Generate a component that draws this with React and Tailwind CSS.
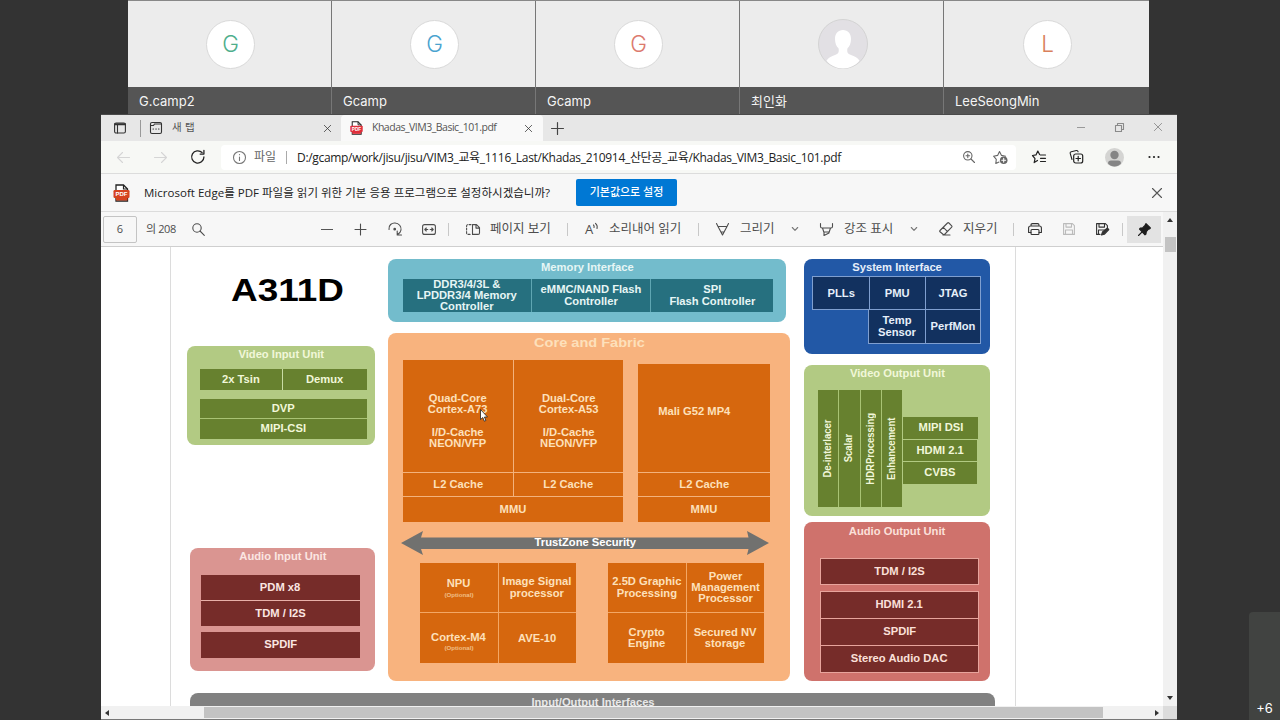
import React from "react";

const participants = [
    { name: "G.camp2", initial: "G", color: "text-[#4fae8c]" },
    { name: "Gcamp", initial: "G", color: "text-[#4aa3cf]" },
    { name: "Gcamp", initial: "G", color: "text-[#dc7a6e]" },
    { name: "최인화", initial: null, color: "" },
    { name: "LeeSeongMin", initial: "L", color: "text-[#d9805c]" },
];

const Icon = ({ children, className = "size-4", box = "0 0 16 16" }) => (
    <svg viewBox={box} className={`shrink-0 overflow-visible ${className}`} fill="none" stroke="currentColor" strokeWidth="1.1" strokeLinecap="round" strokeLinejoin="round">
        {children}
    </svg>
);

const PdfIcon = ({ className }) => (
    <svg viewBox="0 0 16 18" className={`shrink-0 ${className}`}>
        <path d="M2.500 1h7.500l4 4V17H2.500z" fill="#fff" stroke="#222" strokeWidth="1.300" />
        <path d="M10 1v4h4" fill="none" stroke="#222" strokeWidth="1.200" />
        <rect x="0" y="6" width="16" height="8" rx="1.200" fill="currentColor" />
        <path d="M2.500 14h11.500v2.500h-11.500z" fill="currentColor" />
        <text x="8" y="12.300" textAnchor="middle" fontSize="6" fontWeight="700" fill="#fff" fontFamily="Liberation Sans, sans-serif">PDF</text>
    </svg>
);

const CloseIcon = ({ className }) => (
    <Icon className={className} box="0 0 10 10">
        <path d="M.5.5l9 9M9.500.5l-9 9" />
    </Icon>
);

const ParticipantTile = ({ name, initial, color }) => (
    <div className="flex h-full w-[204px] shrink-0 flex-col border-r border-[#777] last:w-[205px] last:border-r-0">
        <div className="flex h-[86px] items-center justify-center bg-[#ececec] pl-0.5">
            {initial ? (
                <div className={`flex size-[49px] items-center justify-center rounded-full border border-[#d9d9d9] bg-white text-[22.5px] font-light ${color}`}>{initial}</div>
            ) : (
                <svg viewBox="0 0 50 50" className="size-[50px]">
                    <circle cx="25" cy="25" r="24.500" fill="#e2e0e4" stroke="#d3d3d3" />
                    <path d="M25 11c5 0 8 3.600 8 9 0 4.500-1.500 7.500-3.600 9.500-.5 3.500 0 5 3 6.200 4.600 1.600 7.400 3 9.100 6.100C37.500 46.500 31.500 49.500 25 49.500S12.500 46.500 8.500 41.800c1.700-3.100 4.500-4.500 9.100-6.100 3-1.200 3.500-2.700 3-6.200-2.100-2-3.600-5-3.600-9.500 0-5.400 3-9 8-9z" fill="#fff" />
                </svg>
            )}
        </div>
        <div className="flex flex-1 items-center bg-[#555] pt-0.5 pl-[11px] text-[13px] text-[#f4f4f4]">{name}</div>
    </div>
);

const TabBar = () => (
    <div className="flex h-[26px] shrink-0 items-center bg-[#e7e7e7] text-[#333]">
        <Icon className="ml-[13px] size-3" box="0 0 12 12">
            <rect x=".6" y="1" width="10.800" height="10" rx="1.500" />
            <path d="M1 2.200h10" strokeWidth="2" />
            <path d="M3.500 3v8" />
        </Icon>
        <div className="ml-[14px] h-[17px] w-px bg-[#999]" />
        <Icon className="ml-[9px] size-3" box="0 0 12 12">
            <rect x=".5" y=".5" width="11" height="11" rx="1.500" />
            <path d="M.5 3.500h3l1-1.500h7M3 7h.5M5.800 7h.5M8.500 7h.5" />
        </Icon>
        <div className="ml-2.5 w-[152px] text-[10.5px] tracking-[0.3px] text-[#555]">새 탭</div>
        <CloseIcon className="size-[7px] text-[#333]" />
        <div className="ml-[10px] flex h-full w-[202px] items-center rounded-t bg-[#f9f9f9]">
            <PdfIcon className="ml-[9px] h-3.5 w-[13px] text-[#e02f3c]" />
            <div className="ml-[9px] w-[153px] text-[10.5px] tracking-[-0.5px] whitespace-nowrap text-[#555]">Khadas_VIM3_Basic_101.pdf</div>
            <CloseIcon className="size-[7px] text-[#333]" />
        </div>
        <Icon className="ml-2 size-[13px] text-[#444]" box="0 0 12 12">
            <path d="M6 .5v11M.5 6h11" />
        </Icon>
        <div className="ml-auto flex items-center pr-[15px] pb-0.5 text-[#8a8a8a]">
            <div className="h-px w-2 bg-[#999]" />
            <Icon className="ml-[30px] size-[9px]" box="0 0 9 9">
                <path d="M.5 2.500h6v6h-6zM2.500 2.500v-2h6v6h-2" />
            </Icon>
            <CloseIcon className="ml-[30px] size-[8px]" />
        </div>
    </div>
);

const AddressBar = () => (
    <div className="flex h-8 shrink-0 items-center bg-[#f7f8f5] text-[#222]">
        <Icon className="ml-4 size-[13px] text-[#d5d5d5]" box="0 0 13 13">
            <path d="M12.500 6.500H.5M5.500 1.500l-5 5 5 5" />
        </Icon>
        <Icon className="ml-6 size-[13px] text-[#d5d5d5]" box="0 0 13 13">
            <path d="M.5 6.500h12M7.500 1.500l5 5-5 5" />
        </Icon>
        <Icon className="ml-6 size-[14px]" box="0 0 13 13">
            <path d="M12 6.500A5.700 5.700 0 1 1 10.300 2.400M12 .3v3.500H8.500" strokeWidth="1.200" />
        </Icon>
        <div className="ml-[16px] flex h-[25px] w-[795px] items-center rounded-sm bg-white">
            <Icon className="ml-3 size-[13px] text-[#777]" box="0 0 13 13">
                <circle cx="6.500" cy="6.500" r="6" />
                <path d="M6.500 6v3.500M6.500 3.500v.2" />
            </Icon>
            <div className="ml-2 w-[23px] text-[12px] whitespace-nowrap text-[#666]">파일</div>
            <div className="ml-[9px] h-[13px] w-px bg-[#aaa]" />
            <div className="ml-[10px] w-[550px] pt-px text-[12px] tracking-[-0.32px] whitespace-nowrap text-[#222]">
                D:/gcamp/work/jisu/jisu/VIM3_교육_1116_Last/Khadas_210914_산단공_교육/Khadas_VIM3_Basic_101.pdf
            </div>
            <Icon className="ml-auto size-3 text-[#666]" box="0 0 12 12">
                <circle cx="4.800" cy="4.800" r="4.200" />
                <path d="M8 8l3.500 3.500M4.800 3v3.600M3 4.800h3.600" />
            </Icon>
            <Icon className="mr-2 ml-[18px] size-[15px] text-[#666]" box="0 0 15 15">
                <path d="M6 12l-3.200 1.500.5-4.200L.6 6.200l4-.8L6.500 1.500l2 3.900 4.100.8" />
                <circle cx="10.700" cy="10.200" r="3.800" fill="currentColor" stroke="none" />
                <path d="M10.700 8.300v3.800M8.800 10.200h3.800" stroke="#fff" />
            </Icon>
        </div>
        <Icon className="ml-4 size-[14px]" box="0 0 14 14">
            <path d="M5.500 10.500L2.200 12.600l.8-4L.5 5.500l3.500-.6L5.800 1l1.800 3.500M8.500 5h5M8.500 8.300h5M8.500 11.500h5" strokeWidth="1.200" />
        </Icon>
        <Icon className="ml-[23px] size-[14px]" box="0 0 14 14">
            <path d="M3 9.500L1.200 3.300q-.3-1.300 1-1.600L7.500.5q1.300-.2 1.600 1.300" />
            <rect x="4.700" y="4" width="9" height="9" rx="2" strokeWidth="1.200" />
            <path d="M9.200 6.300v4.500M7 8.500h4.500" strokeWidth="1.200" />
        </Icon>
        <svg viewBox="0 0 19 19" className="ml-[22px] size-[19px]">
            <circle cx="9.500" cy="9.500" r="9.500" fill="#d4d4d2" />
            <circle cx="9.500" cy="7" r="4.200" fill="#858585" />
            <path d="M3 15.500q0-3 3-3h7q3 0 3 3-2.500 3-6.500 3t-6.500-3z" fill="#858585" />
        </svg>
        <svg viewBox="0 0 12 4" className="ml-6 h-1 w-3" fill="#222">
            <circle cx="1.500" cy="2" r="1.100" />
            <circle cx="6" cy="2" r="1.100" />
            <circle cx="10.500" cy="2" r="1.100" />
        </svg>
    </div>
);

const DefaultAppBar = () => (
    <div className="flex h-[39px] shrink-0 items-center border-y border-[#dcdcdc] bg-[#f7f7f7]">
        <PdfIcon className="ml-[12px] h-[18px] w-[17px] text-[#d6431f]" />
        <div className="ml-[14px] w-[432px] text-[11.5px] tracking-[0.02px] whitespace-nowrap text-[#222]">
            Microsoft Edge를 PDF 파일을 읽기 위한 기본 응용 프로그램으로 설정하시겠습니까?
        </div>
        <div className="flex h-[27px] w-[101px] items-center justify-center rounded-xs bg-[#0078d4] text-[11px] font-medium whitespace-nowrap text-white">기본값으로 설정</div>
        <CloseIcon className="mr-[15px] ml-auto size-[10px] text-[#555]" />
    </div>
);

const Divider = ({ className }) => <div className={`h-[13px] w-px shrink-0 bg-[#c8c8c8] ${className}`} />;

const Chevron = ({ className }) => (
    <Icon className={`h-1 w-[6px] text-[#777] ${className}`} box="0 0 6 4">
        <path d="M.3.5L3 3.300 5.700.5" />
    </Icon>
);

const PdfToolbar = () => (
    <div className="flex h-[34px] items-center bg-[#f7f7f7] text-[12.5px] whitespace-nowrap text-[#4d4d4d]">
        <div className="ml-[2px] flex h-[27px] w-[34px] items-center justify-center rounded-xs border border-[#c4c4c4] text-[11px]">6</div>
        <div className="ml-[9px] w-[30px] text-[11px] tracking-[-0.4px]">의 208</div>
        <Icon className="ml-[16px] size-[13px]" box="0 0 13 13">
            <circle cx="5" cy="5" r="4.200" />
            <path d="M8 8l4.300 4.300" />
        </Icon>
        <div className="ml-[116px] h-px w-3 bg-[#555]" />
        <Icon className="ml-[21px] size-[13px]" box="0 0 13 13">
            <path d="M6.500 1v11M1 6.500h11" />
        </Icon>
        <Icon className="ml-[21px] size-[14px]" box="0 0 14 14">
            <path d="M1 7.500C.3 3 4 .8 7 1c4 .2 6.500 3.500 6 7-.3 2-1.500 3.500-3.500 4.500M9.200 9v4h4.300" />
            <circle cx="6.700" cy="7.200" r=".8" fill="currentColor" />
        </Icon>
        <Icon className="ml-[20px] h-[11px] w-[14px]" box="0 0 14 11">
            <rect x=".6" y=".6" width="12.800" height="9.800" rx="2" />
            <path d="M2.800 5.500h3M8.200 5.500h3M4.300 4L2.800 5.500 4.300 7M9.700 4l1.500 1.500L9.700 7" />
        </Icon>
        <Divider className="ml-[12px]" />
        <Icon className="ml-[17px] h-[11px] w-[14px]" box="0 0 14 11">
            <path d="M5 .6H2q-1.400 0-1.400 1.400v7q0 1.400 1.400 1.400h3" strokeDasharray="2 1.500" />
            <path d="M6.500.6h4l3 3v5.400q0 1.400-1.400 1.400H6.500zM10 .6v3.500h3.400" />
        </Icon>
        <div className="ml-[10px] w-[63px]">페이지 보기</div>
        <Divider className="ml-[14px]" />
        <div className="ml-[17px] flex w-[15px] text-[13px] leading-none">
            A
            <Icon className="size-[6px]" box="0 0 6 6">
                <path d="M.5 2q1 1 .5 2.500M2.500.3q2.300 2 1.500 5.200" />
            </Icon>
        </div>
        <div className="ml-[9px] w-[75px]">소리내어 읽기</div>
        <Divider className="ml-[14px]" />
        <Icon className="ml-[17px] size-[13px]" box="0 0 13 13">
            <path d="M.5.5l1.500 3h9l1.500-3M2 3.500l4.500 8.500L11 3.500M5 9h3" />
        </Icon>
        <div className="ml-[11px] w-[36px]">그리기</div>
        <Chevron className="ml-[16px]" />
        <Icon className="ml-[22px] size-[13px]" box="0 0 13 13">
            <path d="M.5.5v3q0 1.500 1.500 1.500h9q1.500 0 1.500-1.500v-3M2.500 5l1.300 4h5.400l1.300-4M4 9v3.500L9 10V9" />
        </Icon>
        <div className="ml-[11px] w-[50px]">강조 표시</div>
        <Chevron className="ml-[17px]" />
        <Icon className="ml-[22px] size-[14px]" box="0 0 14 14">
            <path d="M1 8.500L8.500 1q.7-.7 1.400 0l2.800 2.800q.7.7 0 1.400L5.500 12.500H4.300L1 9.800q-.7-.7 0-1.300zM4.300 5.300l4 4M4 13h7" />
        </Icon>
        <div className="ml-[10px] w-[37px]">지우기</div>
        <Divider className="ml-[13px]" />
        <Icon className="ml-[14px] h-[12px] w-[14px] text-[#333]" box="0 0 14 12">
            <path d="M3 3V2q0-1.400 1.400-1.400h5.200Q11 .6 11 2v1M3 9.500H.6V5q0-2 2-2h8.800q2 0 2 2v4.500H11" />
            <rect x="3" y="6.500" width="8" height="5" rx="1" />
        </Icon>
        <Icon className="ml-[21px] size-[12px] text-[#bbb]" box="0 0 12 12">
            <path d="M.6.6h8.800l2 2v8.800H.6zM3 .6v3.500h5.500V.6M2.500 11.400V7h7v4.400" />
        </Icon>
        <Icon className="ml-[21px] size-[13px] text-[#333]" box="0 0 13 13">
            <path d="M4 11.400H.6V.6h8.800l2 2v2.300M3 .6v3.500h5.500V.6M2.500 11V7h6" />
            <path d="M5.500 12l1-3 5-4 1.300 1.500-4.500 4.800z" fill="currentColor" />
        </Icon>
        <Divider className="ml-[13px]" />
        <div className="ml-1 flex h-[27px] w-[34px] items-center justify-center bg-[#e3e3e3] text-[#1d1d1d]">
            <Icon className="size-[13px]" box="0 0 13 13">
                <path d="M8 .6L12.400 5l-1 1-1 .2L8.300 8.600 8 11l-1 .8L1.500 6l.8-1 2.500-.3L7 2.300z" fill="currentColor" />
                <path d="M4 9L.5 12.500" />
            </Icon>
        </div>
    </div>
);

// Diagram lettering is wider than the plain face
const Label = ({ children, size = "text-[10px] leading-[11.3px]", className = "" }) => (
    <span className={`block scale-x-112 text-center font-bold whitespace-pre ${size} ${className}`}>{children}</span>
);

const Cell = ({ children, className = "" }) => <div className={`flex shrink-0 items-center justify-center ${className}`}>{children}</div>;

const Panel = ({ title, className, children }) => (
    <div className={`flex shrink-0 flex-col rounded-lg ${className}`}>
        <div className="flex h-4 shrink-0 items-center justify-center pt-0.5">
            <Label>{title}</Label>
        </div>
        {children}
    </div>
);

const InputColumn = () => (
    <div className="flex w-[188px] flex-col">
        <div className="mt-[23px] flex h-10 items-center justify-center pl-3 text-[31px] leading-none font-bold text-black">
            <span className="block scale-x-119">A311D</span>
        </div>
        <Panel title="Video Input Unit" className="mt-[36px] h-[99px] bg-[#b2ca83] text-[#f1f7d9]">
            <div className="mt-[7px] ml-[13px] flex h-[21px] w-[167px] gap-px bg-[#c9dca4]">
                <Cell className="w-[82px] bg-[#67812f]"><Label>2x Tsin</Label></Cell>
                <Cell className="w-[84px] bg-[#67812f]"><Label>Demux</Label></Cell>
            </div>
            <div className="mt-[9px] ml-[13px] flex w-[167px] flex-col gap-px bg-[#a9c374]">
                <Cell className="h-[19px] bg-[#67812f]"><Label>DVP</Label></Cell>
                <Cell className="h-[20px] bg-[#67812f]"><Label>MIPI-CSI</Label></Cell>
            </div>
        </Panel>
        <Panel title="Audio Input Unit" className="mt-[103px] ml-[3px] h-[123px] bg-[#da9591] text-[#fbe6e2]">
            <div className="mt-[11px] ml-[11px] flex w-[159px] flex-col gap-px bg-[#e8b0a8]">
                <Cell className="h-[25px] bg-[#762c29]"><Label>PDM x8</Label></Cell>
                <Cell className="h-[25px] bg-[#762c29]"><Label>TDM / I2S</Label></Cell>
            </div>
            <Cell className="mt-[6px] ml-[11px] h-[26px] w-[159px] bg-[#762c29]"><Label>SPDIF</Label></Cell>
        </Panel>
    </div>
);

const cpuCores = [
    { id: "a73", text: "Quad-Core\nCortex-A73\n\nI/D-Cache\nNEON/VFP" },
    { id: "a53", text: "Dual-Core\nCortex-A53\n\nI/D-Cache\nNEON/VFP" },
];

const CoreColumn = () => (
    <div className="ml-[13px] flex w-[402px] flex-col pt-3">
        <Panel title="Memory Interface" className="h-[63px] w-[398px] bg-[#73bccc] text-[#e6f6f5]">
            <div className="mt-[4px] ml-[15px] flex h-[33px] w-[370px] gap-px overflow-hidden bg-[#5fa6b2]">
                <Cell className="w-[128px] bg-[#26707f]"><Label>{"DDR3/4/3L &\nLPDDR3/4 Memory\nController"}</Label></Cell>
                <Cell className="w-[118px] bg-[#26707f]"><Label>{"eMMC/NAND Flash\nController"}</Label></Cell>
                <Cell className="w-[122px] bg-[#26707f]"><Label>{"SPI\nFlash Controller"}</Label></Cell>
            </div>
        </Panel>
        <div className="mt-[11px] flex h-[348px] flex-col rounded-lg bg-[#f8b37e] text-[#fde0bb]">
            <div className="flex h-[19px] shrink-0 items-center justify-center">
                <Label size="text-[13px] leading-4">Core and Fabric</Label>
            </div>
            <div className="ml-[15px] flex h-[170px] items-end gap-[15px]">
                <div className="flex w-[220px] flex-col gap-px bg-[#f3b27c]">
                    <div className="flex gap-px">
                        {cpuCores.map((core) => (
                            <div key={core.id} className="flex flex-1 flex-col gap-px">
                                <Cell className="h-[112px] bg-[#d6670e] pt-2.5"><Label>{core.text}</Label></Cell>
                                <Cell className="h-[23px] bg-[#d6670e]"><Label>L2 Cache</Label></Cell>
                            </div>
                        ))}
                    </div>
                    <Cell className="h-[25px] bg-[#d6670e]"><Label>MMU</Label></Cell>
                </div>
                <div className="flex w-[132px] flex-col gap-px bg-[#f3b27c]">
                    <Cell className="h-[108px] bg-[#d6670e] pr-[19px] pb-3"><Label>Mali G52 MP4</Label></Cell>
                    <Cell className="h-[23px] bg-[#d6670e]"><Label>L2 Cache</Label></Cell>
                    <Cell className="h-[25px] bg-[#d6670e]"><Label>MMU</Label></Cell>
                </div>
            </div>
            <div className="mt-[9px] ml-[13px] grid h-6 w-[368px] place-items-center text-white">
                <svg viewBox="0 0 368 24" className="col-start-1 row-start-1 h-6 w-[368px]">
                    <path d="M0 12L22 0l-2 6.500h327.500L346 0l22 12-22 12 1.500-6H20l2 6z" fill="#71716f" />
                </svg>
                <Label className="col-start-1 row-start-1">TrustZone Security</Label>
            </div>
            <div className="mt-[8px] ml-[32px] flex gap-8">
                <div className="grid w-[156px] grid-cols-2 gap-px bg-[#f3a765]">
                    <Cell className="h-[49px] flex-col bg-[#d6670e] pt-1">
                        <Label>NPU</Label>
                        <Label size="text-[5.5px] leading-[12px]" className="opacity-70">(Optional)</Label>
                    </Cell>
                    <Cell className="h-[49px] bg-[#d6670e]"><Label>{"Image Signal\nprocessor"}</Label></Cell>
                    <Cell className="h-[50px] flex-col bg-[#d6670e] pt-2.5">
                        <Label>Cortex-M4</Label>
                        <Label size="text-[5.5px] leading-[11px]" className="opacity-70">(Optional)</Label>
                    </Cell>
                    <Cell className="h-[50px] bg-[#d6670e] pt-px"><Label>AVE-10</Label></Cell>
                </div>
                <div className="grid w-[156px] grid-cols-2 gap-px bg-[#f3a765]">
                    <Cell className="h-[49px] bg-[#d6670e]"><Label>{"2.5D Graphic\nProcessing"}</Label></Cell>
                    <Cell className="h-[49px] bg-[#d6670e]"><Label>{"Power\nManagement\nProcessor"}</Label></Cell>
                    <Cell className="h-[50px] bg-[#d6670e]"><Label>{"Crypto\nEngine"}</Label></Cell>
                    <Cell className="h-[50px] bg-[#d6670e]"><Label>{"Secured NV\nstorage"}</Label></Cell>
                </div>
            </div>
        </div>
    </div>
);

const videoStages = ["De-interlacer", "Scalar", "HDRProcessing", "Enhancement"];

const OutputColumn = () => (
    <div className="ml-[14px] flex w-[186px] flex-col pt-3">
        <Panel title="System Interface" className="h-[95px] bg-[#2258a6] text-[#e6effa]">
            <div className="mt-[1px] ml-[8px] flex w-[169px] gap-px bg-[#7f9fd0] p-px">
                <Cell className="h-8 w-14 bg-[#12315f] pt-px"><Label>PLLs</Label></Cell>
                <Cell className="h-8 w-[55px] bg-[#12315f] pt-px"><Label>PMU</Label></Cell>
                <Cell className="h-8 w-[54px] bg-[#12315f] pt-px"><Label>JTAG</Label></Cell>
            </div>
            <div className="ml-[64px] flex w-[113px] gap-px bg-[#7f9fd0] p-px pt-0">
                <Cell className="h-[33px] w-[56px] bg-[#12315f]"><Label>{"Temp\nSensor"}</Label></Cell>
                <Cell className="h-[33px] w-[54px] bg-[#12315f]"><Label>PerfMon</Label></Cell>
            </div>
        </Panel>
        <Panel title="Video Output Unit" className="mt-[11px] h-[151px] bg-[#b2ca83] text-[#f1f7d9]">
            <div className="mt-[9px] ml-[14px] flex h-[117px]">
                <div className="flex gap-px bg-[#a9c374]">
                    {videoStages.map((stage) => (
                        <Cell key={stage} className="w-[20.300px] bg-[#67812f]">
                            <span className="block scale-y-95 rotate-180 text-[10px] leading-none font-bold whitespace-nowrap [writing-mode:vertical-rl]">{stage}</span>
                        </Cell>
                    ))}
                </div>
                <div className="mt-[27px] ml-[1px] flex w-[75px] flex-col gap-px">
                    <Cell className="h-[22px] bg-[#67812f]"><Label>MIPI DSI</Label></Cell>
                    <Cell className="h-[21px] w-[74px] bg-[#67812f]"><Label>HDMI 2.1</Label></Cell>
                    <Cell className="h-[22px] w-[74px] bg-[#67812f]"><Label>CVBS</Label></Cell>
                </div>
            </div>
        </Panel>
        <Panel title="Audio Output Unit" className="mt-[6px] h-[159px] bg-[#cf726c] pt-px text-[#fbe0da]">
            <Cell className="mt-[19px] ml-4 h-[27px] w-[159px] border border-[#e8a49c] bg-[#762c29]"><Label>TDM / I2S</Label></Cell>
            <div className="mt-[6px] ml-4 flex w-[159px] flex-col gap-px border border-[#e8a49c] bg-[#e8a49c]">
                <Cell className="h-[26px] bg-[#762c29]"><Label>HDMI 2.1</Label></Cell>
                <Cell className="h-[26px] bg-[#762c29]"><Label>SPDIF</Label></Cell>
                <Cell className="h-[26px] bg-[#762c29]"><Label>Stereo Audio DAC</Label></Cell>
            </div>
        </Panel>
    </div>
);

const DocumentPage = () => (
    <div className="ml-[69px] h-[459px] w-[846px] overflow-hidden border-x border-[#dcdcdc] bg-white font-['Liberation_Sans',Arial,sans-serif]">
        <div className="flex h-[446px] pl-[16px]">
            <InputColumn />
            <CoreColumn />
            <OutputColumn />
        </div>
        <div className="ml-[19px] flex h-[24px] w-[805px] justify-center rounded-lg bg-[#818181] pt-1 text-[#e8e8e8]">
            <Label>Input/Output Interfaces</Label>
        </div>
    </div>
);

const Arrow = ({ d, className }) => (
    <svg viewBox="0 0 6 6" className={`size-[6px] shrink-0 ${className}`}>
        <path d={d} fill="#333" />
    </svg>
);

const BrowserWindow = () => (
    <div className="ml-[101px] flex h-[605px] w-[1076px] flex-col overflow-hidden bg-white font-['Open_Sans','Noto_Sans_CJK_KR',sans-serif]">
        <TabBar />
        <AddressBar />
        <DefaultAppBar />
        <div className="flex h-[494px] overflow-hidden">
            <div className="w-[1062px] shrink-0">
                <PdfToolbar />
                <div className="h-px bg-[#cfcfcf]" />
                <DocumentPage />
            </div>
            <div className="flex w-[14px] flex-col items-center bg-[#f1f1f1] pt-[5px]">
                <Arrow d="M0 5l3-4 3 4z" />
                <div className="mt-[14px] h-[15px] w-[11px] bg-[#c3c3c3]" />
                <Arrow d="M0 1l3 4 3-4z" className="mt-auto mb-[5px]" />
            </div>
        </div>
        <div className="flex h-[13px] shrink-0 items-center bg-[#f1f1f1]">
            <Arrow d="M5 0L1 3l4 3z" className="ml-[3px]" />
            <div className="ml-[94px] h-[11px] w-[899px] bg-[#c3c3c3]" />
            <Arrow d="M1 0l4 3-4 3z" className="ml-[51px]" />
            <div className="ml-auto h-full w-[14px] bg-[#dcdcdc]" />
        </div>
        <div className="h-px shrink-0 bg-[#777]" />
    </div>
);

const App = () => (
    <div className="relative h-[720px] w-[1280px] overflow-hidden bg-[#333] font-['Inter','Noto_Sans_CJK_KR',sans-serif]">
        <div className="ml-[128px] flex h-[114px] w-[1021px] border-t border-[#888]">
            {participants.map((person, index) => (
                <ParticipantTile key={`participant-${index}`} {...person} />
            ))}
        </div>
        <div className="ml-[101px] h-px w-[1076px] bg-[#4a4a4a]" />
        <BrowserWindow />
        <div className="absolute right-0 bottom-0 flex h-[108px] w-[31px] items-end justify-center rounded-tl bg-[#414341] pb-[2px] text-[13px] text-white">+6</div>
        <svg viewBox="0 0 8 13" className="absolute top-[409px] left-[480px] h-[13px] w-2">
            <path d="M.5.5v10l2.300-2 1.500 3.700 1.600-.7-1.500-3.500h3.100z" fill="#fff" stroke="#222" strokeWidth=".8" />
        </svg>
    </div>
);

export default App;
